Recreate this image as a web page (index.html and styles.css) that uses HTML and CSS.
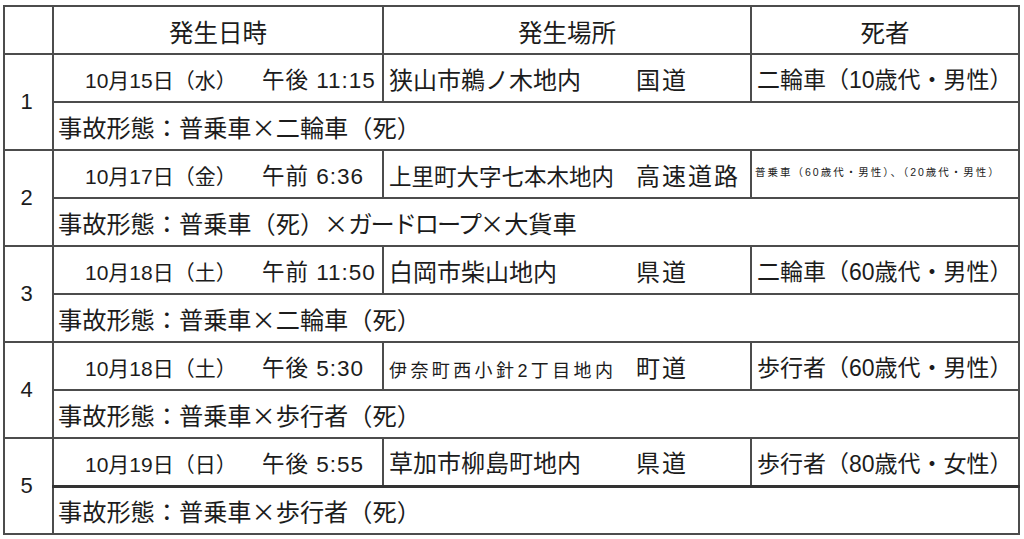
FILE: index.html
```html
<!DOCTYPE html>
<html lang="ja">
<head>
<meta charset="utf-8">
<link rel="stylesheet" href="styles.css">
</head>
<body>
<table class="acc">
  <colgroup>
    <col class="c-no">
    <col class="c-date">
    <col class="c-place">
    <col class="c-dead">
  </colgroup>
  <thead>
    <tr class="head">
      <th></th>
      <th>発生日時</th>
      <th>発生場所</th>
      <th>死者</th>
    </tr>
  </thead>
  <tbody>
    <tr>
      <td class="no" rowspan="2">1</td>
      <td class="date"><span class="d">10月15日（水）</span><span class="t">午後 11:15</span></td>
      <td class="place"><span class="pn">狭山市鵜ノ木地内</span><span class="road">国道</span></td>
      <td class="dead">二輪車（10歳代・男性）</td>
    </tr>
    <tr class="ev">
      <td colspan="3">事故形態：普乗車×二輪車（死）</td>
    </tr>

    <tr>
      <td class="no" rowspan="2">2</td>
      <td class="date"><span class="d">10月17日（金）</span><span class="t">午前 6:36</span></td>
      <td class="place"><span class="pn pn-mid">上里町大字七本木地内</span><span class="road">高速道路</span></td>
      <td class="dead dead-small">普乗車（60歳代・男性）、（20歳代・男性）</td>
    </tr>
    <tr class="ev">
      <td colspan="3">事故形態：普乗車（死）×<span class="kana">ガードロープ</span>×大貨車</td>
    </tr>

    <tr>
      <td class="no" rowspan="2">3</td>
      <td class="date"><span class="d">10月18日（土）</span><span class="t">午前 11:50</span></td>
      <td class="place"><span class="pn">白岡市柴山地内</span><span class="road">県道</span></td>
      <td class="dead">二輪車（60歳代・男性）</td>
    </tr>
    <tr class="ev">
      <td colspan="3">事故形態：普乗車×二輪車（死）</td>
    </tr>

    <tr>
      <td class="no" rowspan="2">4</td>
      <td class="date"><span class="d">10月18日（土）</span><span class="t">午後 5:30</span></td>
      <td class="place"><span class="pn pn-small">伊奈町西小針2丁目地内</span><span class="road">町道</span></td>
      <td class="dead">歩行者（60歳代・男性）</td>
    </tr>
    <tr class="ev">
      <td colspan="3">事故形態：普乗車×歩行者（死）</td>
    </tr>

    <tr class="last-top">
      <td class="no" rowspan="2">5</td>
      <td class="date"><span class="d">10月19日（日）</span><span class="t">午後 5:55</span></td>
      <td class="place"><span class="pn">草加市柳島町地内</span><span class="road">県道</span></td>
      <td class="dead">歩行者（80歳代・女性）</td>
    </tr>
    <tr class="ev">
      <td colspan="3">事故形態：普乗車×歩行者（死）</td>
    </tr>
  </tbody>
</table>
</body>
</html>
```

FILE: styles.css
```css
html, body {
  margin: 0;
  padding: 0;
  background: #ffffff;
}

body {
  font-family: "Liberation Sans", "Noto Sans CJK JP", sans-serif;
  color: #1c1c1c;
}

.acc {
  border-collapse: collapse;
  table-layout: fixed;
  width: 1015px;
  margin: 5px 0 0 3px;
}

.c-no { width: 49px; }
.c-date { width: 330px; }
.c-place { width: 368px; }
.c-dead { width: 268px; }

.acc th,
.acc td {
  border: 2px solid #4c4c4c;
  padding: 0;
  height: 48px;
  box-sizing: border-box;
  white-space: nowrap;
  overflow: hidden;
  vertical-align: middle;
}

.acc tr {
  height: 48px;
}

.head th {
  font-weight: normal;
  font-size: 24.5px;
  text-align: center;
  padding-top: 2px;
}

.no {
  font-size: 22px;
  text-align: center;
  padding-right: 4px !important;
}

.date {
  font-size: 21px;
  padding-left: 31px !important;
}

.date .d {
  display: inline-block;
  width: 177px;
}

.date .t {
  display: inline-block;
  font-size: 22.5px;
  letter-spacing: 1px;
}

.place {
  font-size: 24px;
  padding-left: 5px !important;
}

.place .pn {
  display: inline-block;
  width: 247px;
}

.place .pn-mid {
  font-size: 22.5px;
}

.place .pn-small {
  font-size: 18px;
  letter-spacing: 3.4px;
}

.place .road {
  display: inline-block;
  letter-spacing: 2px;
}

.dead {
  font-size: 23px;
  padding-left: 5px !important;
}

.dead-small {
  font-size: 10.5px;
  letter-spacing: 2px;
  padding-left: 3px !important;
  padding-bottom: 6px !important;
}

.ev td {
  font-family: "Noto Sans CJK JP", "Liberation Sans", sans-serif;
  font-size: 24.2px;
  padding-left: 4px;
}

.ev .kana {
  letter-spacing: -2px;
}

.last-top .date,
.last-top .place,
.last-top .dead {
  border-bottom: 3px solid #333333;
}
```
